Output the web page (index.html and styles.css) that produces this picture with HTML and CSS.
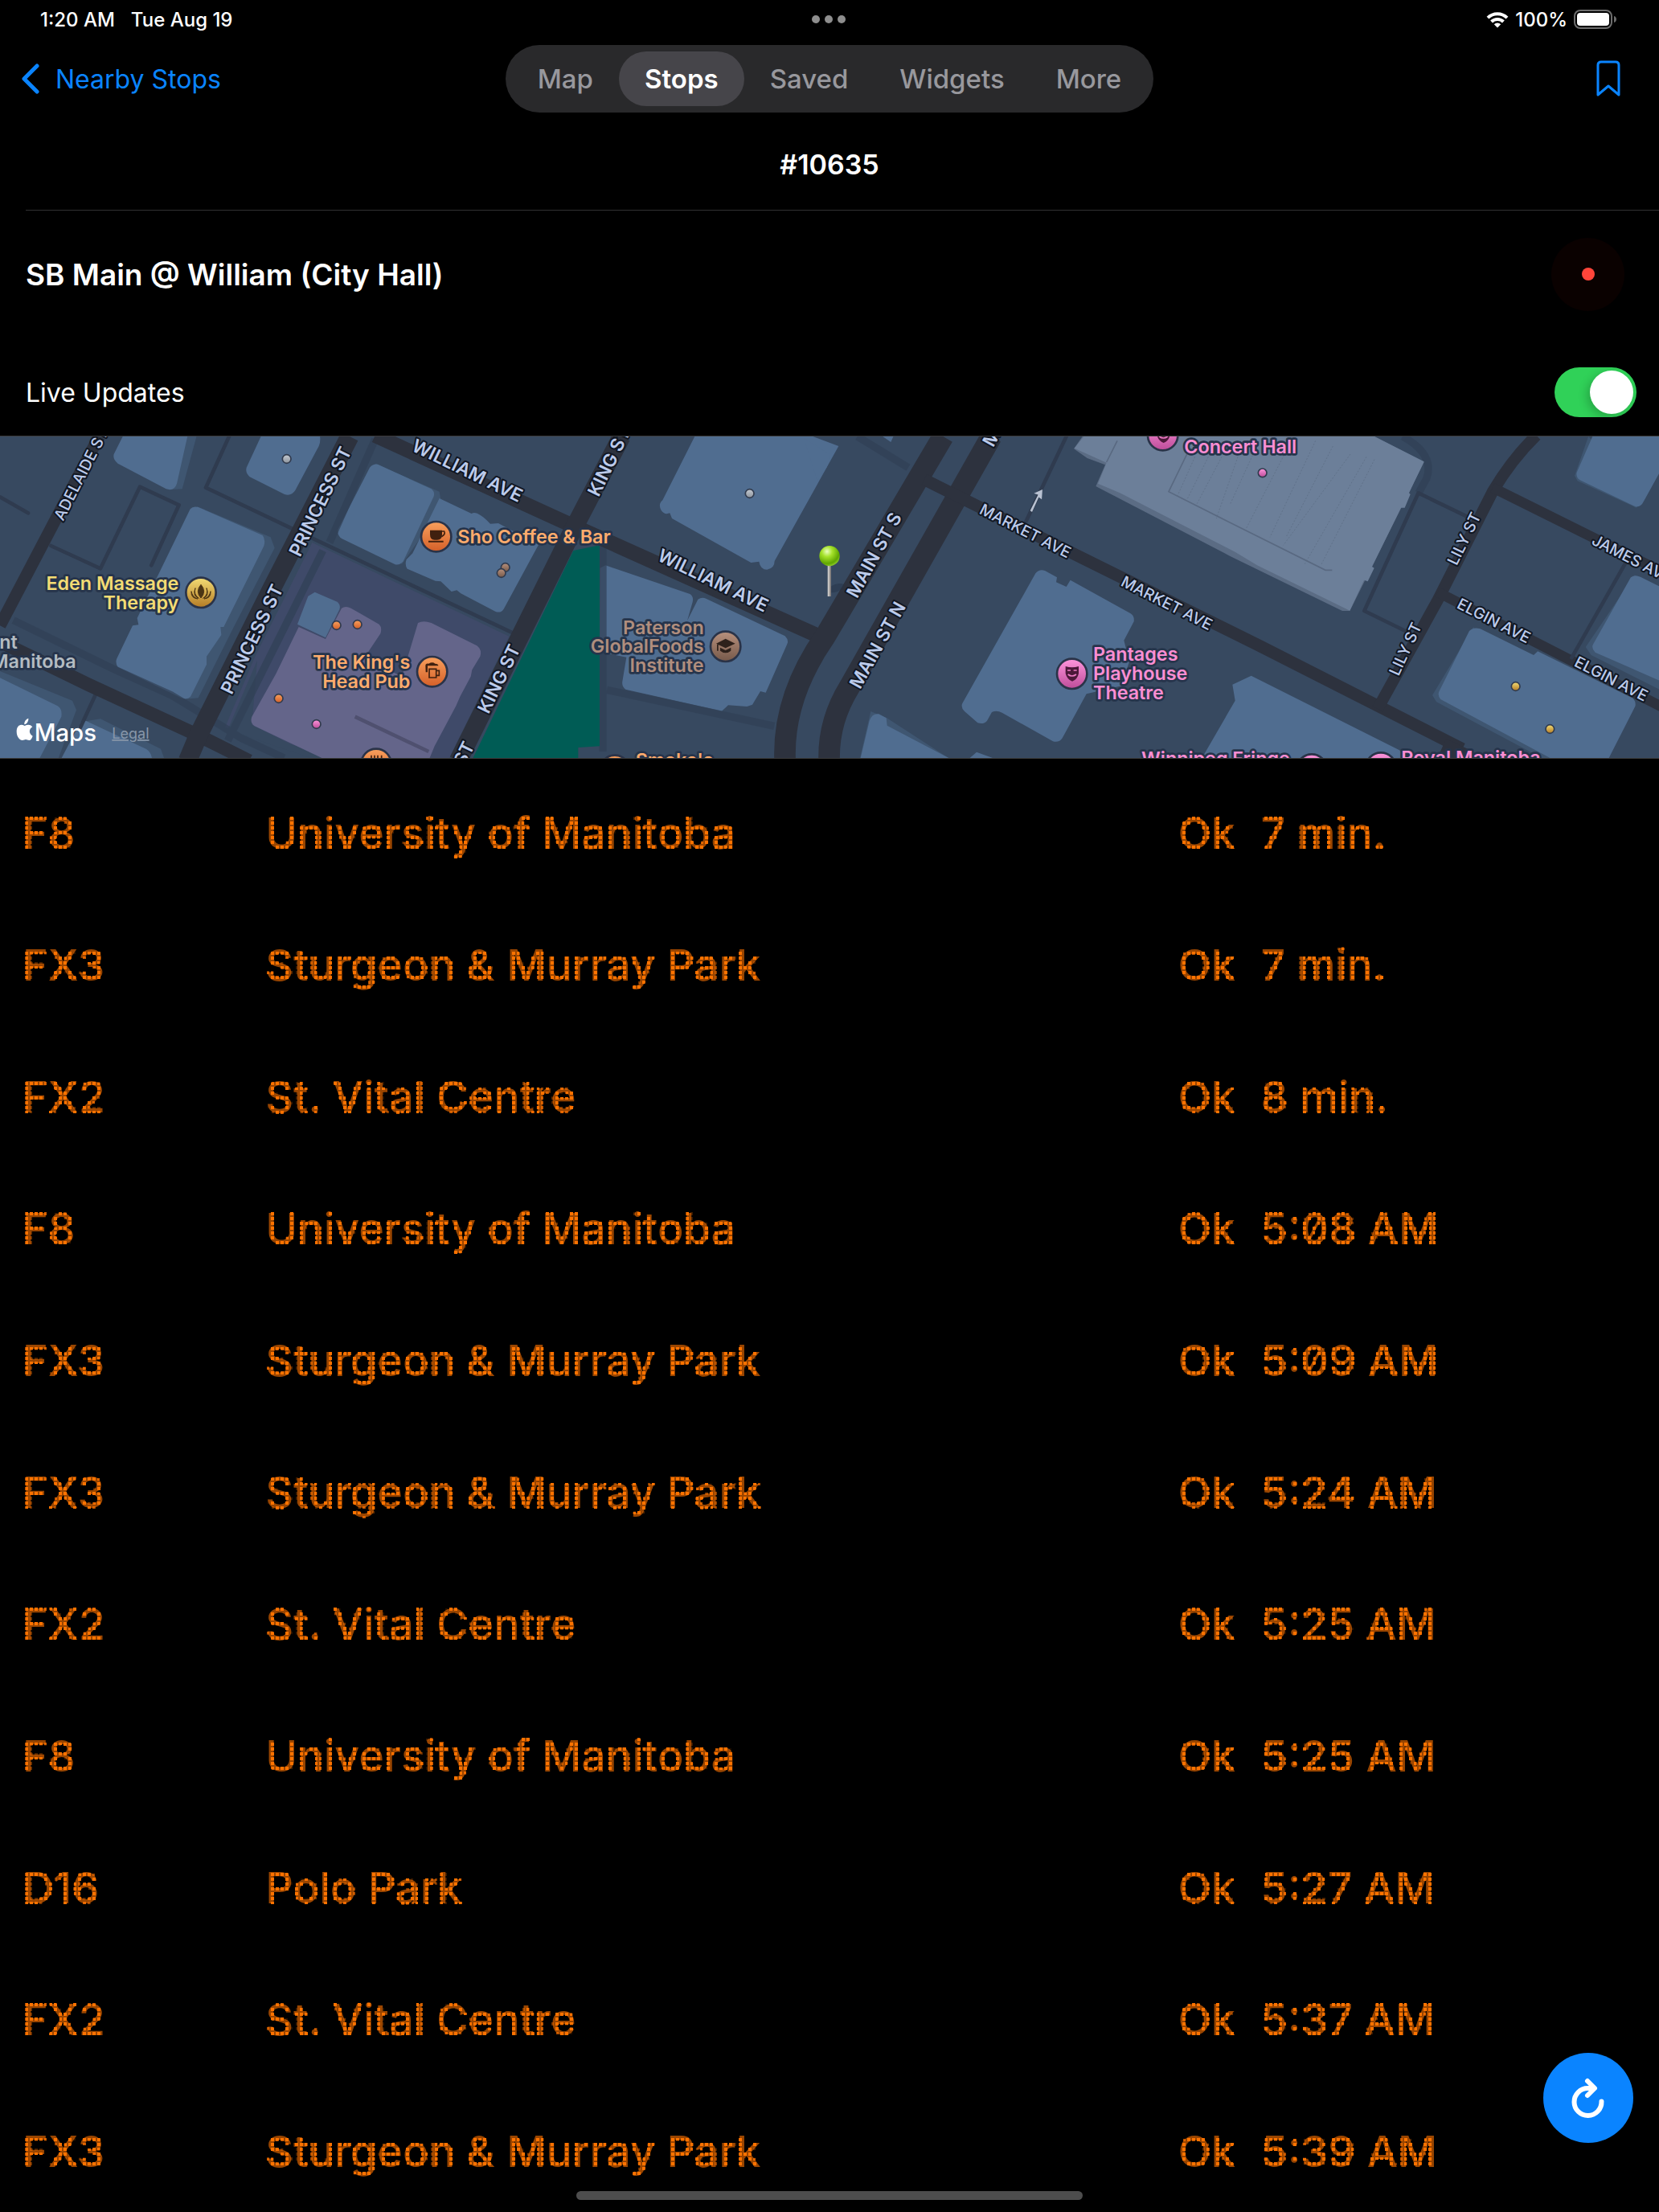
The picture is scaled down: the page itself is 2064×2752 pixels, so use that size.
FILE: index.html
```html
<!DOCTYPE html>
<html lang="en">
<head>
<meta charset="utf-8">
<meta name="viewport" content="width=device-width, initial-scale=1">
<title>Stop #10635</title>
<link rel="stylesheet" href="styles.css">
</head>
<body>
<svg class="defs" width="0" height="0" aria-hidden="true">
  <!-- LED dots: samples the text on a 6px lattice and grows each sample into a square -->
  <filter id="led" x="0" y="0" width="100%" height="100%" primitiveUnits="userSpaceOnUse" color-interpolation-filters="sRGB">
    <feFlood x="2" y="2" width="2" height="2" flood-color="#000" result="seed"/>
    <feComposite in="seed" in2="seed" operator="over" x="0" y="0" width="6" height="6"/>
    <feTile result="lattice"/>
    <feComposite in="SourceGraphic" in2="lattice" operator="in"/>
    <feMorphology operator="dilate" radius="1" result="dots"/>
    <feComponentTransfer in="SourceGraphic" result="glow"><feFuncA type="linear" slope=".6"/></feComponentTransfer>
    <feMerge><feMergeNode in="glow"/><feMergeNode in="dots"/></feMerge>
  </filter>
</svg>
<div class="app">
  <div class="status">
    <div class="status-left"><span>1:20 AM</span><span>Tue Aug 19</span></div>
    <div class="status-dots"><i></i><i></i><i></i></div>
    <div class="status-right">
      <svg class="wifi" viewBox="0 0 28 21" aria-hidden="true"><g fill="none" stroke="#fff" stroke-width="4"><path d="M2 8.200a17 17 0 0 1 24 0"/><path d="M6.600 13a10.500 10.500 0 0 1 14.800 0"/></g><path d="M14 20.500l-4.200-4.200a6 6 0 0 1 8.400 0z" fill="#fff"/></svg>
      <span>100%</span>
      <svg class="battery" viewBox="0 0 54 24" aria-hidden="true"><rect x="1" y="1" width="46" height="22" rx="7" fill="none" stroke="#6d6d6d" stroke-width="2"/><rect x="4" y="4" width="40" height="16" rx="4" fill="#fff"/><path d="M50 8c4 1 4 7 0 8z" fill="#6d6d6d"/></svg>
    </div>
  </div>
  <header class="nav">
    <a class="back" href="#nearby"><svg viewBox="0 0 22 38" aria-hidden="true"><path d="M19 3L3 19l16 16" fill="none" stroke="currentColor" stroke-width="5" stroke-linecap="round" stroke-linejoin="round"/></svg>Nearby Stops</a>
    <nav class="tabs">
      <button type="button">Map</button><button type="button" class="active">Stops</button><button type="button">Saved</button><button type="button">Widgets</button><button type="button">More</button>
    </nav>
    <button type="button" class="bookmark" aria-label="Save stop"><svg viewBox="0 0 30 46" aria-hidden="true"><path d="M2 43V6q0-4 4-4h18q4 0 4 4v37L15 32z" fill="none" stroke="currentColor" stroke-width="3" stroke-linejoin="round"/></svg></button>
  </header>
  <h1 class="number">#10635</h1>
  <section class="stop">
    <h2>SB Main @ William (City Hall)</h2>
    <span class="pulse"><i></i></span>
  </section>
  <label class="live">Live Updates<input type="checkbox" role="switch" checked></label>

  <svg class="map" viewBox="0 24 6192 1200" preserveAspectRatio="xMidYMid slice" role="img" aria-label="Map of stops around City Hall">
    <defs>
      <linearGradient id="orange" x2="0" y2="1"><stop stop-color="#f9a05d"/><stop offset="1" stop-color="#d45f28"/></linearGradient>
      <linearGradient id="gold" x2="0" y2="1"><stop stop-color="#f3dd75"/><stop offset="1" stop-color="#b47b25"/></linearGradient>
      <linearGradient id="pink" x2="0" y2="1"><stop stop-color="#ff95dc"/><stop offset="1" stop-color="#bd4c99"/></linearGradient>
      <linearGradient id="brown" x2="0" y2="1"><stop stop-color="#b8917d"/><stop offset="1" stop-color="#76594a"/></linearGradient>
      <linearGradient id="grey" x2="0" y2="1"><stop stop-color="#c5cbd2"/><stop offset="1" stop-color="#8c939c"/></linearGradient>
      <radialGradient id="ball" cx=".38" cy=".28" r=".75"><stop stop-color="#eaffc0"/><stop offset=".35" stop-color="#a5e22a"/><stop offset=".8" stop-color="#5fa500"/><stop offset="1" stop-color="#8fce2a"/></radialGradient>
    </defs>
    <rect width="6192" height="1300" fill="#374960"/>

    <!-- Princess St to King St -->
    <path d="M1165 420L1900 770 1640 1300H1260L1280 1224 840 1110 950 850z" fill="#3f4a69"/>
    <path d="M960 860L900 1000 850 1120 1160 1224H1250L1160 1210 940 1100z" fill="#374960"/>
    <g class="bldg-side">
      <path d="M480 0L425 100 640 222 680 220 740 0z"/>
      <path d="M735 285L1010 400 1025 440 870 740 815 850 740 1000 690 1004z"/>
      <path d="M0 900L270 1010 285 1045 190 1300H0zM300 1090l75-12L600 1190 640 1300H230z"/>
      <path d="M1400 125L1640 230 1650 290 1500 500 1400 440z"/>
    </g>
    <g class="bldg">
      <path d="M470 0L425 90q-5 20 15 35L620 220q30 10 40-20L705 0z"/>
      <path d="M985 0L920 140q-5 20 12 35l130 65q25 8 40-15L1190 60q10-20 0-60z"/>
      <path d="M710 295q10-12 30-7l240 105q12 15 5 40L835 735l-12 0 3 30-55 80 0 30-60 120q-12 12-35 5L440 885q-10-15-5-30L495 730l22-3-5-25z"/>
      <path d="M0 925L215 1030q18 10 14 40L140 1240H0zM320 1085L545 1190q18 10 22 34H230L290 1110z"/>
      <path d="M1380 140q12-14 30-12L1610 220q15 12 8 30L1505 490q-12 15-30 12L1275 405q-18-12-13-35z"/>
      <path d="M1540 460L1640 255 1760 312q20-14 70 38l30-2 150 80-130 240q-10 16-30 10L1720 610l-15-12-20 5L1645 565l-20-2L1520 518q-10-15-3-35z"/>
      <path d="M2605 0L2473 262q-18 15-5 38 12 18 32 10l8 20 295 165 30-4q5 30 30 30 28-5 28-32L3130 60 2970 0z"/>
      <path d="M2240 515l20-10L2575 612q15 10 10 30l-20 70 40-80q15-10 30-3l295 140q15 15 8 30L2858 980l-20-5-30 50-20 7-70-5-24 22L2335 968q-15-10-12-30l15-90-100-20z"/>
      <path d="M3260 0L3325 45 3345 0zM3000 30L3095 90q5 20-10 50L3050 190z"/>
    </g>
    <g fill="#64658a">
      <path d="M1115 735l100 45 60-115q15-10 35 0L1415 725q12 12 5 35L1360 850 1500 920 1560 720q20-10 50 0l170 85q20 15 12 40l-30 50-5 25-40 75-15 35-80 150-25 60H1235L950 1105q-18-12-10-35L1030 910z"/>
    </g>
    <path d="M1175 605L1255 640q18 10 12 30L1215 775 1110 725 1150 620z" class="bldg"/>
    <path d="M1325 1070L1600 1200" fill="none" stroke="#4f506f" stroke-width="14"/>

    <g class="alley">
      <path d="M0 250L105 310M190 432L375 517 522 212 668 280 565 505M855 24L768 215 1210 425 1920 760M360 980L300 1110"/>
    </g>
    <g class="lane">
      <path d="M50 710L420 890 640 990Q740 1050 900 1150L1060 1224M1400 35L1230 420M1205 450L850 1160"/>
      <path d="M2250 430V1200M2265 970L2890 1105M3200 24L3390 140"/>
      <path d="M5235 24Q5355 90 5325 180L5295 235"/>
    </g>
    <path d="M2238 430V1180l-80 5v40H1765L2140 450z" fill="#005c55"/>

    <g class="road">
      <path d="M370 24L0 730" stroke-width="45"/>
      <path d="M0 790L330 950 740 1140 930 1235" stroke-width="50"/>
      <path d="M1305 24L1010 600 740 1140 700 1235" stroke-width="70"/>
      <path d="M1400 20L2100 340 3080 780" stroke-width="55"/>
      <path d="M2320 24L2150 350 1710 1235" stroke-width="68"/>
      <path d="M3520 24L3080 770Q2920 1000 2930 1235" stroke-width="80"/>
      <path d="M3700 24L3170 960Q3090 1090 3095 1235" stroke-width="80"/>
      <path d="M3450 185L3600 260 4700 805 5458 1190" stroke-width="45"/>
      <path d="M5734 20Q5642 110 5571 230L5366 635 5142 1040" stroke-width="43"/>
      <path d="M5571 215L6235 545M5366 605L6235 1050" stroke-width="38"/>
      <path d="M5385 1180L5480 1224" stroke-width="60"/>
    </g>
    <g class="alley">
      <path d="M3980 24L3830 340M5294 235L5092 675 5245 750M5294 235L5480 325M6065 500L5866 850"/>
    </g>

    <!-- Concert hall block -->
    <path d="M4040 24L4008 70 4058 105 4125 130 4090 210 4590 470 5010 675 5038 675 5315 120 5130 24z" fill="#5b6c84"/>
    <path d="M4045 24L4010 68 4130 122 4098 200 4180 235 4610 455 4692 505 5038 674 5091 560 5105 565 5129 515 5121 510 5229 290 5243 290 5264 240 5259 235 5315 118 5130 24z" fill="#6c7f99"/>
    <g fill="none" stroke="#596981" stroke-width="5">
      <path d="M4170 40L4130 120M4430 90L4362 230 4590 345 4947 523H4972"/>
      <path stroke-width="2" stroke-dasharray="6 6" d="M4460 100L4395 245M4510 100L4430 260M4560 100L4465 280M4620 100L4540 330M4700 40L4590 280M4820 40L4650 370M4910 40L4740 400M4975 60L4800 400M5040 90L4790 430M5100 100L4870 500M5130 110L4930 505"/>
    </g>
    <path class="bldg-side" d="M3250 1050L3310 1075 3540 1224H3210z"/>
    <g class="bldg">
      <path d="M3865 535q15-18 35-10l45 25-3 18 38 17 15-25L4220 685q15 10 12 30L4195 785l20 80-30 90-130 30L3965 1150q-12 18-35 12L3740 1055q-20-10-38-2l-18 32q-12 15-35 8L3600 1050q-15-15-8-30z"/>
      <path d="M3245 1085q10-28 35-25l28 15 3 28 230 121H3212zM3620 1224l25-22 60 22z"/>
      <path d="M4600 950l70-33L5223 1195 5265 1235H4480L4610 1010z"/>
    </g>
    <!-- East of Lily St -->
    <g transform="matrix(1.0217 0 0 1 -99.6 0)">
      <g class="bldg-side">
        <path d="M5900 24L5850 170 5860 190 6075 290 6110 240z"/>
        <path d="M5480 735L5330 990 5345 1015 5750 1235 5800 1200zM6070 540L5890 810 5910 840 6192 985V900z"/>
      </g>
      <g class="bldg">
        <path d="M5915 24L5857 160q-2 20 15 28l200 98q20 2 30-20L6192 100V24z"/>
        <path d="M5465 750q15-16 40-8L5700 840l15-14 348 175q12 15 8 30L5975 1224H5760L5360 1005q-12-15-5-30z"/>
        <path d="M6055 550q15-12 35-2L6192 600V950L5925 830q-15-15-8-30z"/>
      </g>
    </g>
    <path d="M3848 300l30-60-12-4 22-10-2 28-10-7-25 55z" fill="#b9c2d2" stroke="#b9c2d2" stroke-width="5"/>

    <g class="street">
      <text transform="translate(302 165) rotate(-63)">ADELAIDE ST</text>
      <text transform="translate(1194 266) rotate(-64)" class="big">PRINCESS ST</text>
      <text transform="translate(939 780) rotate(-64)" class="big">PRINCESS ST</text>
      <text transform="translate(1745 150) rotate(26)" class="big">WILLIAM AVE</text>
      <text transform="translate(2662 560) rotate(26)" class="big">WILLIAM AVE</text>
      <text transform="translate(2272 118) rotate(-64)" class="big">KING ST</text>
      <text transform="translate(1861 928) rotate(-64)" class="big">KING ST</text>
      <text transform="translate(1690 1290) rotate(-64)" class="big">KING ST</text>
      <text transform="translate(3261 466) rotate(-61)" class="big">MAIN ST S</text>
      <text transform="translate(3274 802) rotate(-61)" class="big">MAIN ST N</text>
      <text transform="translate(3771 -101) rotate(-61)" class="big">MAIN ST N</text>
      <text transform="translate(3827 376) rotate(27)">MARKET AVE</text>
      <text transform="translate(4355 645) rotate(27)">MARKET AVE</text>
      <text transform="translate(5464 405) rotate(-64)">LILY ST</text>
      <text transform="translate(5245 817) rotate(-65)">LILY ST</text>
      <text transform="translate(6092 480) rotate(27)">JAMES AVE</text>
      <text transform="translate(5576 711) rotate(27)">ELGIN AVE</text>
      <text transform="translate(6014 928) rotate(27)">ELGIN AVE</text>
    </g>

    <g class="pins">
      <g fill="url(#grey)"><circle cx="1070" cy="108" r="16"/><circle cx="2798" cy="237" r="16"/></g>
      <g fill="url(#orange)"><circle cx="1256" cy="729" r="16"/><circle cx="1334" cy="726" r="16"/><circle cx="1040" cy="1002" r="16"/></g>
      <g fill="url(#brown)"><circle cx="1886" cy="513" r="16"/><circle cx="1871" cy="534" r="16"/></g>
      <g fill="url(#pink)"><circle cx="1181" cy="1098" r="16"/><circle cx="4712" cy="160" r="16"/></g>
      <g fill="url(#gold)"><circle cx="5657" cy="957" r="16"/><circle cx="5785" cy="1116" r="16"/></g>
    </g>
    <g class="poi">
      <circle cx="750" cy="607" r="56" fill="url(#gold)"/>
      <circle cx="1628" cy="398" r="56" fill="url(#orange)"/>
      <circle cx="1613" cy="902" r="56" fill="url(#orange)"/>
      <circle cx="1404" cy="1246" r="56" fill="url(#orange)"/>
      <circle cx="2295" cy="1270" r="56" fill="url(#orange)"/>
      <circle cx="2708" cy="808" r="56" fill="url(#brown)"/>
      <circle cx="4001" cy="910" r="56" fill="url(#pink)"/>
      <circle cx="4340" cy="20" r="56" fill="url(#pink)"/>
      <circle cx="4896" cy="1266" r="56" fill="url(#pink)"/>
      <circle cx="5154" cy="1260" r="56" fill="url(#pink)"/>
    </g>
    <g fill="#4b3514">
      <path d="M750 577q22 25 0 50-22-25 0-50zM729 590q-8 24 13 38-24-8-13-38zM771 590q8 24-13 38 24-8 13-38zM714 602q4 22 24 28-26-2-24-28zM786 602q-4 22-24 28 26-2 24-28z" stroke="#4b3514" stroke-width="3"/>
    </g>
    <g fill="#40200f">
      <path d="M1605 374h45v16q0 20-18 20h-10q-17 0-17-20zM1599 413h56v6h-56z"/>
      <path d="M1650 378h8q6 12-10 20" fill="none" stroke="#40200f" stroke-width="5"/>
      <path d="M1588 880q0-10 12-8 14-8 24 0 12 0 12 8h-40v24h-7z"/>
      <path d="M1602 892h26v32h-26zM1628 898h11v18h-11" fill="none" stroke="#40200f" stroke-width="5"/>
      <path d="M1386 1214v14M1398 1214v14M1410 1214v14M1424 1214v14" stroke="#40200f" stroke-width="5"/>
    </g>
    <g fill="#2e211b"><path d="M2673 797l35-18 36 18-36 17zM2688 812l20 10 20-10v12q-20 16-40 0zM2676 800h5v24h-5z"/></g>
    <g fill="#4c1839">
      <path d="M3977 882q24 8 49 0v26q-4 22-24 30-20-8-25-30z"/>
      <path d="M4318 -8q24 8 49 0v26q-4 22-24 30-20-8-25-30z"/>
      <path d="M3984 897h12M4007 897h12M3986 912q15 12 31 0M4327 24q15 12 31 0" stroke="#ed7cc5" stroke-width="5" fill="none"/>
    </g>

    <g class="label" fill="#f3dc74" text-anchor="end"><text x="667" y="597">Eden Massage</text><text x="667" y="669">Therapy</text></g>
    <g class="label" fill="#b4bcc2" text-anchor="end"><text x="65" y="815">nt</text><text x="284" y="887">Manitoba</text></g>
    <g class="label" fill="#ffac6d">
      <text x="1708" y="423">Sho Coffee &amp; Bar</text>
      <text x="1531" y="891" text-anchor="end">The King's</text><text x="1531" y="964" text-anchor="end">Head Pub</text>
      <text x="2372" y="1258">Smoke's</text>
    </g>
    <g class="label" fill="#b08e7e" text-anchor="end"><text x="2627" y="761">Paterson</text><text x="2627" y="832">GlobalFoods</text><text x="2627" y="903">Institute</text></g>
    <g class="label" fill="#fb8ed3">
      <text x="4080" y="862">Pantages</text><text x="4080" y="934">Playhouse</text><text x="4080" y="1006">Theatre</text>
      <text x="4420" y="86">Concert Hall</text>
      <text x="4260" y="1252">Winnipeg Fringe</text>
      <text x="5230" y="1249">Royal Manitoba</text>
    </g>

    <ellipse cx="3120" cy="590" rx="32" ry="14" fill="#263347" opacity=".5" transform="rotate(-20 3120 590)"/>
    <path d="M3095 500v121" stroke="#c4c2c0" stroke-width="12"/><path d="M3099 500v121" stroke="#77706d" stroke-width="4"/>
    <circle cx="3096" cy="470" r="38" fill="url(#ball)"/>

    <path d="M92 1104c-18-10-30 2-30 22 0 20 12 32 21 32 7 0 8-3 13-3s7 3 13 3c6 0 10-8 13-16-15-8-15-26-1-34-8-10-18-9-29-4zm-1-5c-1-11 6-20 15-23 1 11-6 21-15 23z" fill="#fff"/>
    <text x="128" y="1160" class="brand">Maps</text>
    <a href="#legal"><text x="418" y="1152" class="legal">Legal</text></a>
  </svg>

  <main class="board">
    <table>
      <colgroup><col class="c-route"><col class="c-dest"><col class="c-state"><col></colgroup>
      <tbody>
        <tr><td>F8</td><td>University of Manitoba</td><td>Ok</td><td>7 min.</td></tr>
        <tr><td>FX3</td><td>Sturgeon &amp; Murray Park</td><td>Ok</td><td>7 min.</td></tr>
        <tr><td>FX2</td><td>St. Vital Centre</td><td>Ok</td><td>8 min.</td></tr>
        <tr><td>F8</td><td>University of Manitoba</td><td>Ok</td><td>5:08 AM</td></tr>
        <tr><td>FX3</td><td>Sturgeon &amp; Murray Park</td><td>Ok</td><td>5:09 AM</td></tr>
        <tr><td>FX3</td><td>Sturgeon &amp; Murray Park</td><td>Ok</td><td>5:24 AM</td></tr>
        <tr><td>FX2</td><td>St. Vital Centre</td><td>Ok</td><td>5:25 AM</td></tr>
        <tr><td>F8</td><td>University of Manitoba</td><td>Ok</td><td>5:25 AM</td></tr>
        <tr><td>D16</td><td>Polo Park</td><td>Ok</td><td>5:27 AM</td></tr>
        <tr><td>FX2</td><td>St. Vital Centre</td><td>Ok</td><td>5:37 AM</td></tr>
        <tr><td>FX3</td><td>Sturgeon &amp; Murray Park</td><td>Ok</td><td>5:39 AM</td></tr>
      </tbody>
    </table>
  </main>
  <button type="button" class="refresh" aria-label="Refresh"><svg viewBox="0 0 112 112" aria-hidden="true"><g fill="none" stroke="#fff" stroke-width="6" stroke-linecap="round" stroke-linejoin="round"><path d="M72.500 60.500a17 17 0 1 1-17-16.500h7"/><path d="M55 35l9 9-9 9"/></g></svg></button>
  <div class="home"></div>
</div>
</body>
</html>
```
FILE: styles.css
```css
* { box-sizing: border-box; }
body { margin: 0; background: #000; color: #fff; font-family: Inter, "Liberation Sans", sans-serif; }
button { font: inherit; border: 0; background: none; color: inherit; padding: 0; cursor: pointer; }
.defs { position: absolute; }
.app { display: flex; flex-direction: column; height: 100vh; overflow: hidden; }
.app > * { flex: none; }

.status { display: grid; grid-template-columns: 1fr auto 1fr; align-items: center; height: 48px; padding: 0 52px 0 50px; font-size: 24px; font-weight: 500; }
.status-left { display: flex; gap: 20px; }
.status-dots { display: flex; gap: 6px; }
.status-dots i { width: 10px; height: 10px; border-radius: 50%; background: #8e8e8e; }
.status-right { display: flex; justify-content: flex-end; align-items: center; gap: 8px; }
.wifi { width: 28px; height: 21px; }
.battery { width: 54px; height: 24px; }

.nav { display: grid; grid-template-columns: 1fr auto 1fr; align-items: center; height: 100px; font-size: 33px; }
.back { display: flex; align-items: center; gap: 20px; padding-left: 27px; color: #0a84ff; font-size: 32px; text-decoration: none; }
.back svg { width: 22px; height: 38px; }
.tabs { display: flex; padding: 8px; border-radius: 42px; background: #29292b; color: #98989d; font-weight: 500; }
.tabs button { height: 68px; padding: 0 32px; border-radius: 34px; }
.tabs .active { background: #46454a; color: #fff; font-weight: 600; }
.bookmark { justify-self: end; margin-right: 48px; color: #0a84ff; }
.bookmark svg { display: block; width: 30px; height: 46px; }

.number { margin: 0 0 0 32px; height: 114px; padding: 37px 32px 0 0; border-bottom: 1px solid #303032; text-align: center; font-size: 34px; line-height: 40px; font-weight: 600; }
.stop { display: flex; align-items: center; justify-content: space-between; height: 158px; padding: 0 43px 0 32px; }
.stop h2 { margin: 0; font-size: 37px; font-weight: 600; }
.pulse { display: grid; place-items: center; width: 91px; height: 91px; border-radius: 50%; background: #0a0100; }
.pulse i { width: 16px; height: 16px; border-radius: 50%; background: #ff453a; }
.live { display: flex; align-items: center; justify-content: space-between; height: 122px; padding: 14px 28px 0 32px; font-size: 32px; }
.live input { appearance: none; display: flex; justify-content: flex-end; width: 102px; height: 62px; margin: 0; padding: 4px; border-radius: 31px; background: #30d158; }
.live input::before { content: ""; width: 54px; height: 54px; border-radius: 50%; background: #fff; box-shadow: -4px 4px 12px #0003; }
.live input:not(:checked) { justify-content: flex-start; background: #39393d; }

.map { display: block; width: 100%; height: auto; border-top: 1px solid #3b3b3b; border-bottom: 1px solid #3b3b3b; font-family: Inter, "Liberation Sans", sans-serif; }
.bldg { fill: #506d90; }
.bldg-side { fill: #3f5671; }
.alley { fill: none; stroke: #2f3b4f; stroke-width: 14; stroke-linejoin: round; stroke-linecap: round; }
.lane { fill: none; stroke: #314056; stroke-width: 28; opacity: .7; }
.road { fill: none; stroke: #2d323e; }
.street { fill: #bccbeb; font-size: 58px; font-weight: 500; text-anchor: middle; stroke: #111722; stroke-width: 12px; stroke-linejoin: round; paint-order: stroke; dominant-baseline: central; }
.street .big { font-size: 68px; font-weight: 600; }
.pins circle { stroke: #303a4d; stroke-width: 5px; }
.poi circle { stroke: #2a3348; stroke-width: 8px; }
.label text { font-size: 70px; font-weight: 600; stroke: #26344b; stroke-width: 16px; stroke-linejoin: round; paint-order: stroke; }
.brand { fill: #fff; font-size: 88px; font-weight: 500; }
.legal { fill: #8796a9; font-size: 54px; text-decoration: underline; }

.board { flex: 1 1 0; min-height: 0; overflow: hidden; padding-top: 11px; }
.board table { width: 100%; table-layout: fixed; border-collapse: collapse; filter: url(#led); }
.c-route { width: 16%; }
.c-dest { width: 55%; }
.c-state { width: 5%; }
.board td { height: 164px; padding: 0; color: #ff7300; font-size: 54px; line-height: 66px; font-weight: 500; white-space: nowrap; font-feature-settings: "zero"; }
.board td:first-child { padding-left: 28px; }

.refresh { position: fixed; right: 32px; bottom: 86px; width: 112px; height: 112px; border-radius: 50%; background: #0a84ff; }
.refresh svg { display: block; width: 100%; }
.home { position: fixed; left: 50%; bottom: 15px; width: 630px; height: 11px; margin-left: -315px; border-radius: 6px; background: #4d4d4d; }
```
